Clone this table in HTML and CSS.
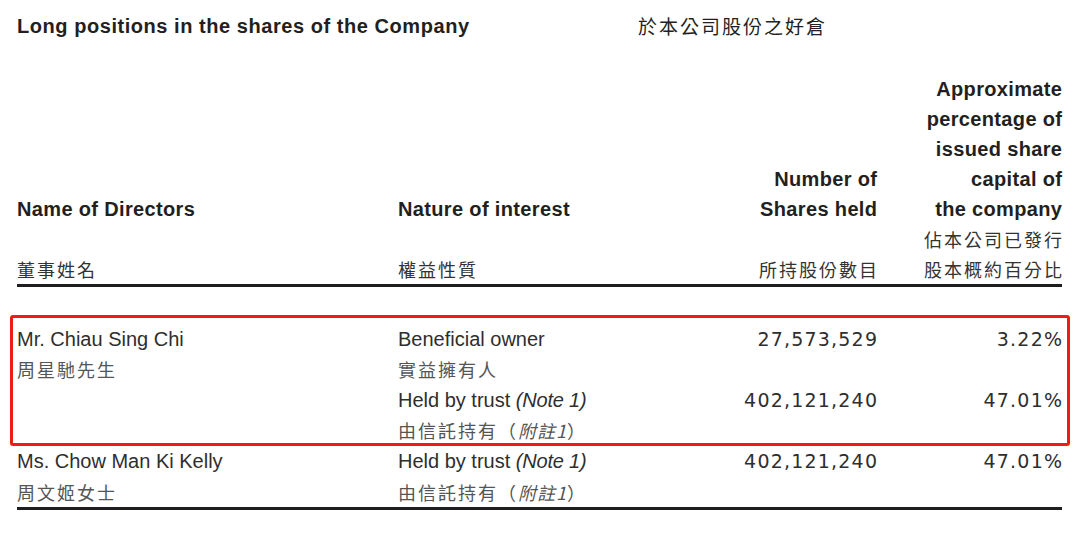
FILE: index.html
```html
<!DOCTYPE html>
<html lang="zh-Hant">
<head>
<meta charset="utf-8">
<title>Long positions in the shares of the Company</title>
<link rel="stylesheet" href="styles.css">
</head>
<body>
<div class="page">
  <div class="title-row">
    <h1 class="title-en">Long positions in the shares of the Company</h1>
    <div class="title-zh">於本公司股份之好倉</div>
  </div>

  <div class="thead cols">
    <div class="th">
      <div class="th-en">Name of Directors</div>
      <div class="th-zh">董事姓名</div>
    </div>
    <div class="th">
      <div class="th-en">Nature of interest</div>
      <div class="th-zh">權益性質</div>
    </div>
    <div class="th right">
      <div class="th-en">Number of<br>Shares held</div>
      <div class="th-zh">所持股份數目</div>
    </div>
    <div class="th right">
      <div class="th-en">Approximate<br>percentage of<br>issued share<br>capital of<br>the company</div>
      <div class="th-zh">佔本公司已發行<br>股本概約百分比</div>
    </div>
  </div>

  <div class="tbody">
    <div class="highlight">
      <div class="entry cols">
        <div class="cell"><div class="en">Mr. Chiau Sing Chi</div><div class="zh">周星馳先生</div></div>
        <div class="cell"><div class="en">Beneficial owner</div><div class="zh">實益擁有人</div></div>
        <div class="cell right"><div class="en num">27,573,529</div></div>
        <div class="cell right"><div class="en num">3.22%</div></div>
      </div>
      <div class="entry cols">
        <div class="cell"></div>
        <div class="cell"><div class="en">Held by trust <i>(Note 1)</i></div><div class="zh">由信託持有（<i>附註1</i>）</div></div>
        <div class="cell right"><div class="en num">402,121,240</div></div>
        <div class="cell right"><div class="en num">47.01%</div></div>
      </div>
    </div>
    <div class="entry cols last">
      <div class="cell"><div class="en">Ms. Chow Man Ki Kelly</div><div class="zh">周文姬女士</div></div>
      <div class="cell"><div class="en">Held by trust <i>(Note 1)</i></div><div class="zh">由信託持有（<i>附註1</i>）</div></div>
      <div class="cell right"><div class="en num">402,121,240</div></div>
      <div class="cell right"><div class="en num">47.01%</div></div>
    </div>
  </div>
</div>
</body>
</html>
```

FILE: styles.css
```css
* { box-sizing: border-box; }

html, body {
  margin: 0;
  padding: 0;
  background: #ffffff;
}

body {
  font-family: "Liberation Sans", Arial, "Noto Sans CJK TC", sans-serif;
  color: #2e2e2e;
}

.page {
  width: 1080px;
  padding: 11px 18px 0 17px;
}

.title-row {
  display: flex;
  align-items: center;
  height: 30px;
  margin-bottom: 33px;
}

.title-en {
  margin: 0;
  width: 621px;
  font-size: 20px;
  font-weight: bold;
  line-height: 30px;
  letter-spacing: 0.55px;
  color: #231f20;
}

.title-zh {
  font-family: "Noto Sans CJK TC", sans-serif;
  font-size: 19px;
  letter-spacing: 2px;
  line-height: 30px;
  color: #231f20;
}

.cols {
  display: grid;
  grid-template-columns: 381px 300px 179px 185px;
}

.thead {
  border-bottom: 3px solid #1e1e1e;
}

.th {
  display: flex;
  flex-direction: column;
  justify-content: flex-end;
}

.th-en {
  font-size: 20px;
  font-weight: bold;
  line-height: 30px;
  letter-spacing: 0.35px;
  color: #231f20;
}

.right .th-en {
  margin-right: -0.35px;
}

.th-zh {
  height: 60px;
  display: flex;
  flex-direction: column;
  justify-content: flex-end;
  font-family: "Noto Sans CJK TC", sans-serif;
  font-size: 18px;
  letter-spacing: 2px;
  line-height: 30px;
  color: #333333;
}

.right {
  text-align: right;
}

.right .th-zh,
.right .zh {
  margin-right: -2px;
}

.tbody {
  padding-top: 28px;
  border-bottom: 3px solid #1e1e1e;
}

.highlight {
  margin: 0 -8px 0 -7px;
  padding: 6px 5px 0 4px;
  border: 3px solid #ee1c14;
  border-radius: 3px;
}

.highlight .entry:last-child {
  margin-bottom: -2px;
}

.cell .en {
  font-size: 20px;
  line-height: 30.33px;
  color: #2e2e2e;
}

.cell .zh {
  font-family: "Noto Sans CJK TC", sans-serif;
  font-size: 18px;
  letter-spacing: 2px;
  line-height: 30.33px;
  color: #555555;
}

.cell .en i {
  letter-spacing: -0.2px;
}

.cell .zh i {
  font-family: "Noto Sans CJK TC", sans-serif;
  letter-spacing: 1px;
}

.cell .num {
  font-family: "DejaVu Sans", sans-serif;
  font-size: 19px;
  letter-spacing: 1.2px;
  margin-right: -1.2px;
}
```
